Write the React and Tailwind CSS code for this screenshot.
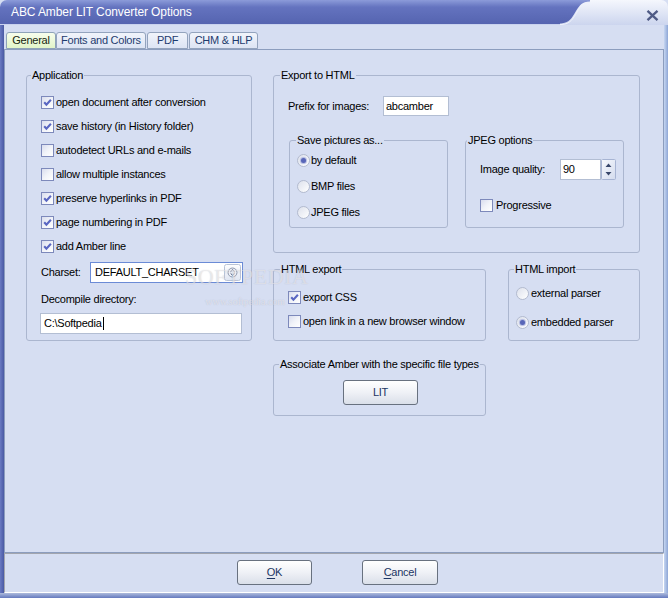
import React from "react";

function CheckBox({ checked }) {
  return (
    <span className="flex h-[13px] w-[13px] shrink-0 items-center justify-center border border-[#7d89bb] bg-linear-to-br from-[#d9ddee] via-[#f1f3f9] to-white">
      {checked && (
        <svg width="9" height="9" viewBox="0 0 9 9">
          <path d="M1.2 4.3 L3.4 6.6 L7.9 1.7" fill="none" stroke="#5a67c2" strokeWidth="2.1" />
        </svg>
      )}
    </span>
  );
}

function Radio({ selected }) {
  return (
    <span className="flex h-[13px] w-[13px] shrink-0 items-center justify-center rounded-full border border-[#b3bbcf] bg-linear-to-br from-[#dde1ec] to-white">
      {selected && <span className="h-[5px] w-[5px] rounded-full bg-[#5866b8] shadow-[0_0_1px_1px_rgba(150,160,215,0.7)]" />}
    </span>
  );
}

function CheckRow({ checked, children, className }) {
  return (
    <div className={"flex items-center gap-[2px] " + (className || "")}>
      <CheckBox checked={checked} />
      <span className="leading-[13px] whitespace-nowrap">{children}</span>
    </div>
  );
}

function RadioRow({ selected, children, className }) {
  return (
    <div className={"flex items-center gap-[1px] " + (className || "")}>
      <Radio selected={selected} />
      <span className="leading-[13px] whitespace-nowrap">{children}</span>
    </div>
  );
}

function Group({ title, className, legendClass, bodyClass, children }) {
  return (
    <fieldset className={"min-w-0 shrink-0 rounded-[3px] border border-[#abb6cf] p-0 " + className}>
      <legend className={"px-[1px] leading-[13px] whitespace-nowrap " + legendClass}>{title}</legend>
      <div className={bodyClass}>{children}</div>
    </fieldset>
  );
}

function Btn({ children, className }) {
  return (
    <div className={"flex h-[25px] shrink-0 items-center justify-center rounded-[3px] border border-[#68717f] bg-linear-to-b from-white via-[#eff1f6] to-[#dadfe9] text-[#1c3563] " + className}>
      {children}
    </div>
  );
}

function Tab({ children, active, className }) {
  return (
    <div
      className={
        "flex h-[17px] shrink-0 items-center justify-center rounded-t-[3px] border leading-[13px] " +
        (active
          ? "border-[#8ea3b8] bg-linear-to-b from-[#f7fdec] to-[#e2f5c9] text-[#17260f] "
          : "border-[#93a3bd] bg-linear-to-b from-[#f1f4fb] to-[#dde4f4] text-[#1e3b6e] ") +
        className
      }
    >
      {children}
    </div>
  );
}

export default function App() {
  return (
    <div className="relative flex h-[598px] w-[668px] flex-col overflow-hidden bg-[#d6def2] font-['Liberation_Sans',Arial,sans-serif] text-[11px] tracking-[-0.25px] text-black">
      {/* Title bar */}
      <div className="flex h-[25px] shrink-0">
        <div className="flex flex-1 items-center rounded-tl-[7px] border-b border-[#c9d2ee] bg-linear-to-b from-[#8c9bd9] via-[#6473bf] via-30% to-[#5564b0] pl-[11px] text-[12px] tracking-[-0.1px] text-white">
          ABC Amber LIT Converter Options
        </div>
        <svg width="30" height="25" viewBox="0 0 30 25" className="shrink-0">
          <defs>
            <linearGradient id="lg" x1="0" y1="0" x2="0" y2="1">
              <stop offset="0" stopColor="#f5f7fd" />
              <stop offset="1" stopColor="#ccd5ee" />
            </linearGradient>
            <linearGradient id="bg" x1="0" y1="0" x2="0" y2="1">
              <stop offset="0" stopColor="#8c9bd9" />
              <stop offset="0.3" stopColor="#6473bf" />
              <stop offset="1" stopColor="#5564b0" />
            </linearGradient>
          </defs>
          <rect x="0" y="0" width="30" height="25" fill="url(#lg)" />
          <path d="M0 0 H30 V1.5 C22 1.5 20 5 16 11 C12 18 9 23 1 23.5 H0 Z" fill="url(#bg)" />
          <path d="M0 24.5 H2 C10 24 13 19 17 12 C21 5 23 2.5 30 2.5" fill="none" stroke="#eef1fb" strokeWidth="1" />
        </svg>
        <div className="w-[78px] shrink-0 rounded-tr-[7px] bg-linear-to-b from-[#f5f7fd] to-[#ccd5ee] pt-[10px] pl-[56px]">
          <svg width="13" height="11" viewBox="0 0 13 11">
            <path d="M1.5 0.8 L11.5 10.2 M11.5 0.8 L1.5 10.2" stroke="#4f5b86" strokeWidth="2.3" />
          </svg>
        </div>
      </div>

      <div className="flex flex-1">
        <div className="w-[4px] shrink-0 bg-linear-to-r from-[#6a7ac3] to-[#4a5aa4]" />
        <div className="flex flex-1 flex-col">
          {/* Tabs */}
          <div className="flex h-[24px] shrink-0 pt-[7px] pl-[2px]">
            <Tab active className="w-[50px]">General</Tab>
            <Tab className="w-[90px]">Fonts and Colors</Tab>
            <Tab className="ml-[1px] w-[41px]">PDF</Tab>
            <Tab className="ml-[1px] w-[69px]">CHM &amp; HLP</Tab>
          </div>

          {/* Panel */}
          <div className="flex h-[504px] shrink-0 border border-[#8c9dbe] pt-[19px] pl-[21px]">
            {/* Application */}
            <Group title="Application" className="h-[272px] w-[226px]" legendClass="ml-[4px]" bodyClass="flex flex-col pt-[8px] pl-[14px]">
              <CheckRow checked className="h-[24px]">open document after conversion</CheckRow>
              <CheckRow checked className="h-[24px]">save history (in History folder)</CheckRow>
              <CheckRow className="h-[24px]">autodetect URLs and e-mails</CheckRow>
              <CheckRow className="h-[24px]">allow multiple instances</CheckRow>
              <CheckRow checked className="h-[24px]">preserve hyperlinks in PDF</CheckRow>
              <CheckRow checked className="h-[24px]">page numbering in PDF</CheckRow>
              <CheckRow checked className="h-[24px]">add Amber line</CheckRow>
              <div className="mt-[4px] flex h-[21px] items-center">
                <span className="w-[49px] leading-[13px]">Charset:</span>
                <div className="flex h-[21px] w-[153px] items-center justify-between border border-[#6b8bd6] bg-white pr-[1px] pl-[4px]">
                  <span className="leading-[13px]">DEFAULT_CHARSET</span>
                  <svg width="17" height="17" viewBox="0 0 17 17">
                    <defs>
                      <linearGradient id="sb" x1="0" y1="0" x2="0" y2="1">
                        <stop offset="0" stopColor="#ffffff" />
                        <stop offset="1" stopColor="#dfe5f2" />
                      </linearGradient>
                    </defs>
                    <rect x="0.5" y="0.5" width="16" height="16" rx="2" fill="url(#sb)" stroke="#b9c3d6" />
                    <circle cx="8.5" cy="8.5" r="4.5" fill="#eef1f7" stroke="#8e98ae" />
                    <path d="M6.6 7.6 L8.5 5.8 L10.4 7.6 M6.6 9.4 L8.5 11.2 L10.4 9.4" fill="none" stroke="#4a5575" strokeWidth="1" />
                  </svg>
                </div>
              </div>
              <div className="mt-[10px] leading-[13px]">Decompile directory:</div>
              <div className="mt-[7px] ml-[-1px] flex h-[21px] w-[202px] items-center border border-[#b3bed3] bg-white pl-[3px]">
                <span className="leading-[13px]">C:\Softpedia</span>
                <span className="ml-[1px] h-[13px] w-[1px] bg-black" />
              </div>
            </Group>

            {/* Right column */}
            <div className="ml-[21px] flex w-[367px] shrink-0 flex-col">
              <Group title="Export to HTML" className="h-[184px] w-[367px]" legendClass="ml-[6px]">
                <div className="mt-[14px] flex h-[20px] items-center pl-[14px]">
                  <span className="w-[95px] leading-[13px]">Prefix for images:</span>
                  <div className="flex h-[20px] w-[66px] items-center border border-[#b3bed3] bg-white pl-[2px]">
                    <span className="leading-[13px]">abcamber</span>
                  </div>
                </div>
                <div className="mt-[18px] flex pl-[15px]">
                  <Group title="Save pictures as..." className="h-[94px] w-[159px]" legendClass="ml-[6px]" bodyClass="pl-[7px]">
                    <RadioRow selected className="h-[26px]">by default</RadioRow>
                    <RadioRow className="h-[26px]">BMP files</RadioRow>
                    <RadioRow className="h-[26px]">JPEG files</RadioRow>
                  </Group>
                  <Group title="JPEG options" className="ml-[17px] h-[94px] w-[159px]" legendClass="ml-[1px]" bodyClass="pl-[14px]">
                    <div className="mt-[12px] flex h-[21px] items-center">
                      <span className="w-[80px] leading-[13px]">Image quality:</span>
                      <div className="flex h-[21px] w-[41px] items-center border border-[#b3bed3] bg-white pl-[2px]">
                        <span className="leading-[13px]">90</span>
                      </div>
                      <svg width="15" height="21" viewBox="0 0 15 21">
                        <defs>
                          <linearGradient id="sp" x1="0" y1="0" x2="1" y2="1">
                            <stop offset="0" stopColor="#f7f9fd" />
                            <stop offset="1" stopColor="#d3dbee" />
                          </linearGradient>
                        </defs>
                        <rect x="0.5" y="0.5" width="14" height="20" rx="1" fill="url(#sp)" stroke="#a7b4d3" />
                        <path d="M4.5 8 L7.5 4.5 L10.5 8 Z M4.5 13 L7.5 16.5 L10.5 13 Z" fill="#38476b" />
                      </svg>
                    </div>
                    <CheckRow className="mt-[19px] gap-[3px]">Progressive</CheckRow>
                  </Group>
                </div>
              </Group>

              <div className="mt-[10px] flex">
                <Group title="HTML export" className="h-[78px] w-[213px]" legendClass="ml-[6px]" bodyClass="pt-[9px] pl-[14px]">
                  <CheckRow checked className="h-[24px]">export CSS</CheckRow>
                  <CheckRow className="h-[24px]">open link in a new browser window</CheckRow>
                </Group>
                <Group title="HTML import" className="ml-[22px] h-[78px] w-[132px]" legendClass="ml-[5px]" bodyClass="pt-[3px] pl-[7px]">
                  <RadioRow className="h-[29px] gap-[2px]">external parser</RadioRow>
                  <RadioRow selected className="h-[29px] gap-[2px]">embedded parser</RadioRow>
                </Group>
              </div>

              <Group title="Associate Amber with the specific file types" className="mt-[17px] h-[58px] w-[213px]" legendClass="ml-[5px]" bodyClass="pl-[69px]">
                <Btn className="mt-[9px] w-[75px]">LIT</Btn>
              </Group>
            </div>
          </div>

          {/* Bottom button frame */}
          <div className="flex h-[40px] shrink-0 border border-t-[#a2a5ae] border-r-white border-b-white border-l-[#a2a5ae] pt-[6px]">
            <Btn className="ml-[232px] w-[75px]">
              <span className="underline underline-offset-2">O</span>K
            </Btn>
            <Btn className="ml-[50px] w-[76px]">
              <span className="underline underline-offset-2">C</span>ancel
            </Btn>
          </div>
        </div>
        <div className="w-[4px] shrink-0 bg-linear-to-r from-[#c6d6f1] to-[#8ea6d6]" />
      </div>
      <div className="h-[5px] shrink-0 bg-linear-to-b from-[#aebbdc] to-[#6579be]" />

      {/* Watermark */}
      <div className="pointer-events-none absolute top-[260px] left-[185px] font-['Liberation_Serif',serif] text-[22px] tracking-[0.5px] text-white/50 [text-shadow:0_0_1px_rgba(90,90,110,0.3)]">
        SOFTPEDIA
      </div>
      <div className="pointer-events-none absolute top-[294px] left-[205px] font-['Liberation_Serif',serif] text-[10px] tracking-[0px] text-white/50 [text-shadow:0_0_1px_rgba(90,90,110,0.3)]">
        www.softpedia.com
      </div>
    </div>
  );
}
